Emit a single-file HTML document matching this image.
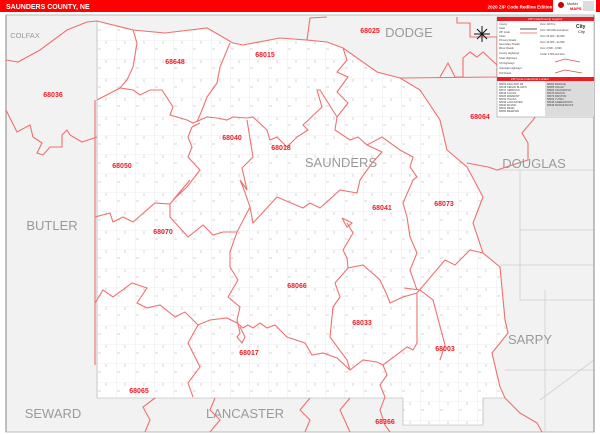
<!DOCTYPE html>
<html><head><meta charset="utf-8"><style>
html,body{margin:0;padding:0;background:#fff;width:600px;height:435px;overflow:hidden}
svg{display:block}
text{font-family:"Liberation Sans",sans-serif}
.z{fill:#ee1c25;font-size:7px;font-weight:bold;text-anchor:middle}
.c{fill:#9a9a9a;font-size:13px;text-anchor:middle}
.r{fill:none;stroke:#f07070;stroke-width:1.1}
.g{fill:none;stroke:#cfcfcf;stroke-width:0.8}
.l{font-size:2.6px;fill:#444}
</style></head><body>
<svg width="600" height="435" viewBox="0 0 600 435" xmlns="http://www.w3.org/2000/svg">
<defs>
<pattern id="grid" x="97" y="21" width="19" height="19" patternUnits="userSpaceOnUse">
<rect width="19" height="19" fill="#fff"/>
<path d="M0 0H19M0 0V19" stroke="#e6e6e6" stroke-width="0.8"/>
<path d="M9 1V4M1 9H4" stroke="#aaa" stroke-width="0.5"/>
</pattern>
<clipPath id="cl"><polygon id="cty" points="97,21 133,30 165,33 207,28 233,43 243,45 280,38 327,42 343,48 377,72 400,78 420,90 440,120 447,150 467,167 483,197 473,223 483,253 500,267 505,320 508,333 492,353 500,387 505,398 483,398 483,425 403,425 403,398 97,398"/></clipPath>
</defs>
<rect x="0" y="0" width="600" height="435" fill="#fff"/>
<rect x="6" y="15" width="588" height="417" fill="#f2f2f2" stroke="#bbb" stroke-width="1"/>
<path class="g" d="M496 170H594M520 230H594M500 265H594M520 300H594M505 370H594M520 170V300M545 290V432M540 400L594 360M400 150L440 120"/>
<rect x="97" y="21" width="420" height="410" fill="url(#grid)" clip-path="url(#cl)"/>
<use href="#cty" fill="none" stroke="#aaa" stroke-width="0.6"/>
<path d="M6 15V432M594 15V432" stroke="#999" stroke-width="1.2"/>
<g class="r">
<polyline points="6,60 18,62 40,50 67,30 87,22 97,21 133,30 165,33 207,28 233,43 243,45 280,38 307,40 327,42 343,48 377,72 400,78 420,90 440,120 447,150 467,167 483,197 473,223 483,253 500,267 505,320 508,333 492,353 500,387 505,398 520,413 537,423 542,432"/>
<polyline points="6,110 17,132 30,125 33,137 42,143 37,153 43,155 50,147 62,147 62,135 67,130 70,135 82,142 97,137"/>
<polyline points="95,100 95,365"/>
<polyline points="133,30 137,43 133,67 127,80 120,88 97,100"/>
<polyline points="230,43 220,67 217,83 207,97 202,110 197,122"/>
<polyline points="120,88 133,90 140,95 150,90 162,90 173,107 170,115 187,120 193,123 207,117 217,118 227,120 233,117 247,118 253,117 267,130 270,140 277,137 287,147 297,137 308,130 303,125 322,107 317,90 320,90 337,117"/>
<polyline points="343,48 347,60 337,72 348,77 337,92 348,103 337,117 335,130 350,140 358,137 367,145 382,137 400,150 413,157 410,167 417,177 413,180 403,203 407,217 410,237 417,253 410,270 417,290"/>
<polyline points="247,120 253,157 242,168 247,190 240,180 243,187 250,207 253,223 277,197 303,208 310,203 320,208 340,190 357,193 360,180 372,163 382,152 367,145"/>
<polyline points="200,123 192,127 188,137 192,147 188,157 200,170 187,187 173,200 190,180 170,204 155,203 133,222 123,217 113,222 110,213 95,217"/>
<polyline points="170,204 170,217 188,237 203,225 213,235 223,232 237,232 250,207"/>
<polyline points="237,232 230,252 230,267 238,280 228,297 240,307 237,320 240,333 237,337 242,343 245,337 240,327"/>
<polyline points="95,303 103,290 113,297 132,283 147,288 137,303 147,308 160,305 175,317 185,312 198,325 210,320 227,318 237,323 243,328 248,325 253,328 260,323 267,328 275,325 287,337 305,343 312,355 323,353 337,358 350,370 363,360 377,362 383,365 407,347 413,350 417,343 417,293 403,297 390,303 387,295 380,280 363,265 348,268 335,283 340,297 333,307 330,337 347,360 350,370"/>
<polyline points="198,325 188,343 200,367 188,383 193,397"/>
<polyline points="347,223 353,233 343,250 347,258 348,268"/>
<polyline points="342,218 347,227 352,223 342,218"/>
<polyline points="383,365 387,375 380,385 385,397 380,410 385,425 390,432"/>
<polyline points="417,293 445,260 455,265 470,250 483,253"/>
<polyline points="404,288 420,290 433,300 445,345 440,360"/>
<polyline points="155,398 143,407 150,420 145,432"/>
<polyline points="215,398 210,410 220,420 210,432"/>
<polyline points="310,398 300,410 310,420 305,432"/>
<polyline points="350,398 340,410 350,432"/>
<polyline points="307,40 310,18 327,17"/>
<polyline points="457,17 457,23 470,23 470,37 497,37 497,77 400,78"/>
<polyline points="440,77 448,63 455,77 463,77 463,58 470,52 477,57 483,52 497,65"/>
<polyline points="467,163 488,167 497,170 528,160 528,143 522,133 533,120 540,110"/>
</g>
<text x="25" y="38" fill="#9a9a9a" font-size="7.5" text-anchor="middle">COLFAX</text>
<text class="c" x="409" y="37">DODGE</text>
<text class="c" x="534" y="168">DOUGLAS</text>
<text class="c" x="341" y="167">SAUNDERS</text>
<text class="c" x="52" y="230">BUTLER</text>
<text class="c" x="530" y="344">SARPY</text>
<text class="c" x="53" y="418">SEWARD</text>
<text class="c" x="245" y="418">LANCASTER</text>
<g>
<text class="z" x="53" y="97">68036</text>
<text class="z" x="175" y="64">68648</text>
<text class="z" x="265" y="57">68015</text>
<text class="z" x="370" y="33">68025</text>
<text class="z" x="480" y="119">68064</text>
<text class="z" x="232" y="140">68040</text>
<text class="z" x="281" y="150">68018</text>
<text class="z" x="122" y="168">68050</text>
<text class="z" x="382" y="210">68041</text>
<text class="z" x="444" y="206">68073</text>
<text class="z" x="163" y="234">68070</text>
<text class="z" x="297" y="288">68066</text>
<text class="z" x="362" y="325">68033</text>
<text class="z" x="445" y="351">68003</text>
<text class="z" x="249" y="355">68017</text>
<text class="z" x="139" y="393">68065</text>
<text class="z" x="385" y="424">68366</text>
</g>
<g stroke="#111" stroke-width="1">
<path d="M482 26V42M474 34H490M477 29L487 39M487 29L477 39"/>
</g>
<rect x="0" y="0" width="600" height="12" fill="#ff0000"/>
<text x="6" y="9" fill="#fff" font-size="7" font-weight="bold">SAUNDERS COUNTY, NE</text>
<text x="520" y="8.5" fill="#fff" font-size="4.5" font-weight="bold" text-anchor="middle">2020 ZIP Code Redline Edition</text>
<rect x="553" y="0" width="43" height="12" fill="#fff"/>
<circle cx="561" cy="5" r="3" fill="#c00"/>
<text x="567" y="5" font-size="3.5" fill="#333">Market</text>
<text x="570" y="10" font-size="4" fill="#e00" font-weight="bold">MAPS</text>
<rect x="583" y="1" width="11" height="10" fill="#ddd"/>
<rect x="497" y="17" width="97" height="100" fill="#fff" stroke="#888" stroke-width="0.5"/>
<rect x="497" y="17" width="97" height="4" fill="#ee1c25"/>
<text x="545" y="20.2" font-size="3" fill="#fff" text-anchor="middle">ZIP Code/County Legend</text>
<g class="l">
<text x="499" y="25">County</text><text x="499" y="29">State</text><text x="499" y="33">ZIP Code</text><text x="499" y="37">Cities</text><text x="499" y="41">Primary Roads</text><text x="499" y="45">Secondary Roads</text><text x="499" y="49">Minor Roads</text><text x="499" y="54">County Highways</text><text x="499" y="59">State Highways</text><text x="499" y="64">US Highways</text><text x="499" y="69">Interstate Highways</text><text x="499" y="74">Toll Roads</text>
<text x="540" y="25">Over 1M Pop</text><text x="540" y="31">Over 100,000 and above</text><text x="540" y="37">Over 25,000 - 99,999</text><text x="540" y="43">Over 10,000 - 24,999</text><text x="540" y="49">Over 2,500 - 9,999</text><text x="540" y="55">Under 2,500 and less</text>
</g>
<path d="M520 29H537" stroke="#555" stroke-width="1"/>
<path d="M520 33H537" stroke="#f08080" stroke-width="1"/>
<path d="M555 62L565 59L580 62M555 73L565 70L582 73" stroke="#e05050" fill="none" stroke-width="0.8"/>
<text x="576" y="28" font-size="5" fill="#222" font-weight="bold">City</text>
<text x="578" y="33" font-size="4" fill="#222">City</text>
<rect x="497" y="77" width="97" height="4" fill="#ee1c25"/>
<text x="530" y="80.2" font-size="3" fill="#fff" text-anchor="middle">ZIP Code Index/Grid Locator</text>
<rect x="545" y="81" width="48" height="35" fill="#dcdcdc"/>
<g class="l" font-size="2.4">
<text x="499" y="85">68003 ASHLAND D8</text><text x="499" y="88">68015 CEDAR BLUFFS</text><text x="499" y="91">68017 CERESCO</text><text x="499" y="94">68018 COLON</text><text x="499" y="97">68025 FREMONT</text><text x="499" y="100">68033 ITHACA</text><text x="499" y="103">68036 LANCASTER</text><text x="499" y="106">68040 MALMO</text><text x="499" y="109">68041 MEAD</text><text x="499" y="112">68050 MEMPHIS</text>
<text x="547" y="85">68064 PRAGUE</text><text x="547" y="88">68065 VALLEY</text><text x="547" y="91">68066 VALPARAISO</text><text x="547" y="94">68070 WAHOO</text><text x="547" y="97">68073 WESTON</text><text x="547" y="100">68366 YUTAN</text><text x="547" y="103">68648 GREENWOOD</text><text x="547" y="106">68648 MORSE BLUFF</text>
</g>
</svg>
</body></html>
